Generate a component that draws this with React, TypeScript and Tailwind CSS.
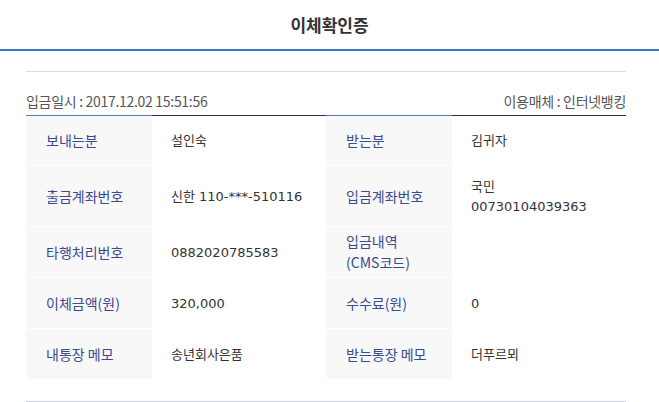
const rows: { label1: string[]; value1: string[]; label2: string[]; value2: string[]; h: string }[] = [
  { label1: ["보내는분"], value1: ["설인숙"], label2: ["받는분"], value2: ["김귀자"], h: "h-[51px]" },
  { label1: ["출금계좌번호"], value1: ["신한 110-***-510116"], label2: ["입금계좌번호"], value2: ["국민", "00730104039363"], h: "h-[61px]" },
  { label1: ["타행처리번호"], value1: ["0882020785583"], label2: ["입금내역", "(CMS코드)"], value2: [], h: "h-[51px]" },
  { label1: ["이체금액(원)"], value1: ["320,000"], label2: ["수수료(원)"], value2: ["0"], h: "h-[51px]" },
  { label1: ["내통장 메모"], value1: ["송년회사은품"], label2: ["받는통장 메모"], value2: ["더푸르뫼"], h: "h-[51px]" },
];

function Label({ lines, h, first }: { lines: string[]; h: string; first: boolean }) {
  return (
    <div
      className={`${h} flex flex-col justify-center pl-[20px] bg-[#f8f8f8] text-[14px] leading-[21px] text-[#394a8e] border-b border-white ${
        first ? "border-t border-t-[#5a77b6]" : ""
      }`}
    >
      {lines.map((l) => (
        <span key={l}>{l}</span>
      ))}
    </div>
  );
}

function Value({ lines, h, first }: { lines: string[]; h: string; first: boolean }) {
  return (
    <div
      className={`${h} flex flex-col justify-center pl-[19px] font-['DejaVu_Sans','Noto_Sans_CJK_KR',sans-serif] text-[13px] leading-[20px] text-[#333] ${
        first ? "border-t border-[#2e3340]" : ""
      }`}
    >
      {lines.map((l) => (
        <span key={l}>{l}</span>
      ))}
    </div>
  );
}

export default function App() {
  return (
    <div className="w-[659px] h-[402px] overflow-hidden bg-white font-['Noto_Sans_CJK_KR',sans-serif]">
      <div className="h-[51px] flex items-center justify-center border-b-2 border-[#3a78cc]">
        <h1 className="text-[17px] font-bold text-[#333] pt-[1px]">이체확인증</h1>
      </div>

      <div className="w-[600px] ml-[26px]">
        <div className="mt-[20px] border-t border-[#dddddd]" />

        <div className="h-[43px] pt-[16px] flex items-center justify-between text-[14px] text-[#555] tracking-[-0.3px]">
          <span>입금일시 : 2017.12.02 15:51:56</span>
          <span>이용매체 : 인터넷뱅킹</span>
        </div>

        <div className="grid grid-cols-[126px_174px_126px_174px]">
          {rows.map((r, i) => (
            <div key={i} className="contents">
              <Label lines={r.label1} h={r.h} first={i === 0} />
              <Value lines={r.value1} h={r.h} first={i === 0} />
              <Label lines={r.label2} h={r.h} first={i === 0} />
              <Value lines={r.value2} h={r.h} first={i === 0} />
            </div>
          ))}
        </div>

        <div className="mt-[21px] border-t border-[#c5d0e6]" />
      </div>
    </div>
  );
}
